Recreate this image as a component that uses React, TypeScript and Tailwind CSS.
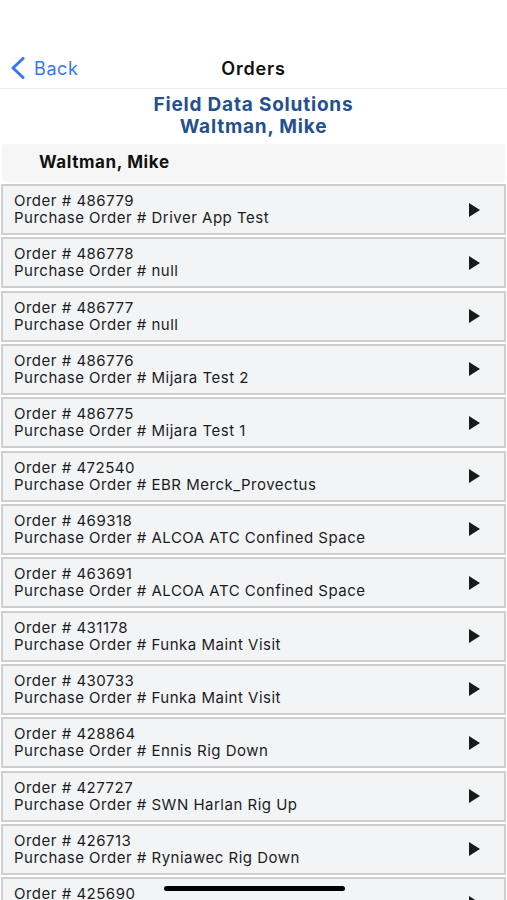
const orders = [
  ["486779", "Driver App Test"],
  ["486778", "null"],
  ["486777", "null"],
  ["486776", "Mijara Test 2"],
  ["486775", "Mijara Test 1"],
  ["472540", "EBR Merck_Provectus"],
  ["469318", "ALCOA ATC Confined Space"],
  ["463691", "ALCOA ATC Confined Space"],
  ["431178", "Funka Maint Visit"],
  ["430733", "Funka Maint Visit"],
  ["428864", "Ennis Rig Down"],
  ["427727", "SWN Harlan Rig Up"],
  ["426713", "Ryniawec Rig Down"],
  ["425690", "Rig Down"],
];

export default function App() {
  return (
    <div
      className="relative w-[507px] h-[900px] overflow-hidden bg-white text-[#111]"
      style={{ fontFamily: "Inter, 'Noto Sans', sans-serif" }}
    >
      {/* Nav bar */}
      <div className="h-[89px] pt-[46px] flex items-start border-b border-[#ececec]">
        <div className="relative w-full h-[44px] flex items-center">
          <div className="flex items-center pl-[10px] gap-[8px] text-[#3478f6]">
            <svg width="16" height="22" viewBox="0 0 16 22">
              <path
                d="M13 1.5 L3 11 L13 20.5"
                fill="none"
                stroke="#3478f6"
                strokeWidth="3"
                strokeLinecap="round"
                strokeLinejoin="round"
              />
            </svg>
            <span className="text-[18px] tracking-[0.6px]">Back</span>
          </div>
          <div className="absolute left-0 right-0 text-center text-[18px] font-semibold tracking-[0.8px] pointer-events-none">
            Orders
          </div>
        </div>
      </div>

      {/* Title */}
      <div className="pt-[5px] text-center text-[#25508e] text-[19px] font-bold leading-[22px] tracking-[0.8px]">
        <div>Field Data Solutions</div>
        <div>Waltman, Mike</div>
      </div>

      {/* Section header */}
      <div className="mt-[6px] mx-[2px] h-[38px] rounded-[4px] bg-[#f6f6f6] flex items-center pl-[37px] text-[17px] font-bold tracking-[0.6px]">
        Waltman, Mike
      </div>

      {/* Orders */}
      <div className="mt-[2px] flex flex-col gap-[2.33px] px-[1px]">
        {orders.map(([id, po]) => (
          <div
            key={id}
            className="h-[51px] shrink-0 border-2 border-[#cfcfcf] bg-[#f3f4f6] flex items-center pl-[11px] pr-[24px]"
          >
            <div className="flex-1 flex flex-col gap-[1px] text-[15px] leading-[16px] text-[#1c1c1c] tracking-[0.5px]">
              <div>Order # {id}</div>
              <div>Purchase Order # {po}</div>
            </div>
            <svg width="11" height="14" viewBox="0 0 11 14">
              <path d="M0 0 L11 7 L0 14 Z" fill="#1a1a1a" />
            </svg>
          </div>
        ))}
      </div>

      {/* Home indicator */}
      <div className="absolute left-[164px] bottom-[9px] w-[181px] h-[5px] rounded-full bg-black" />
    </div>
  );
}
